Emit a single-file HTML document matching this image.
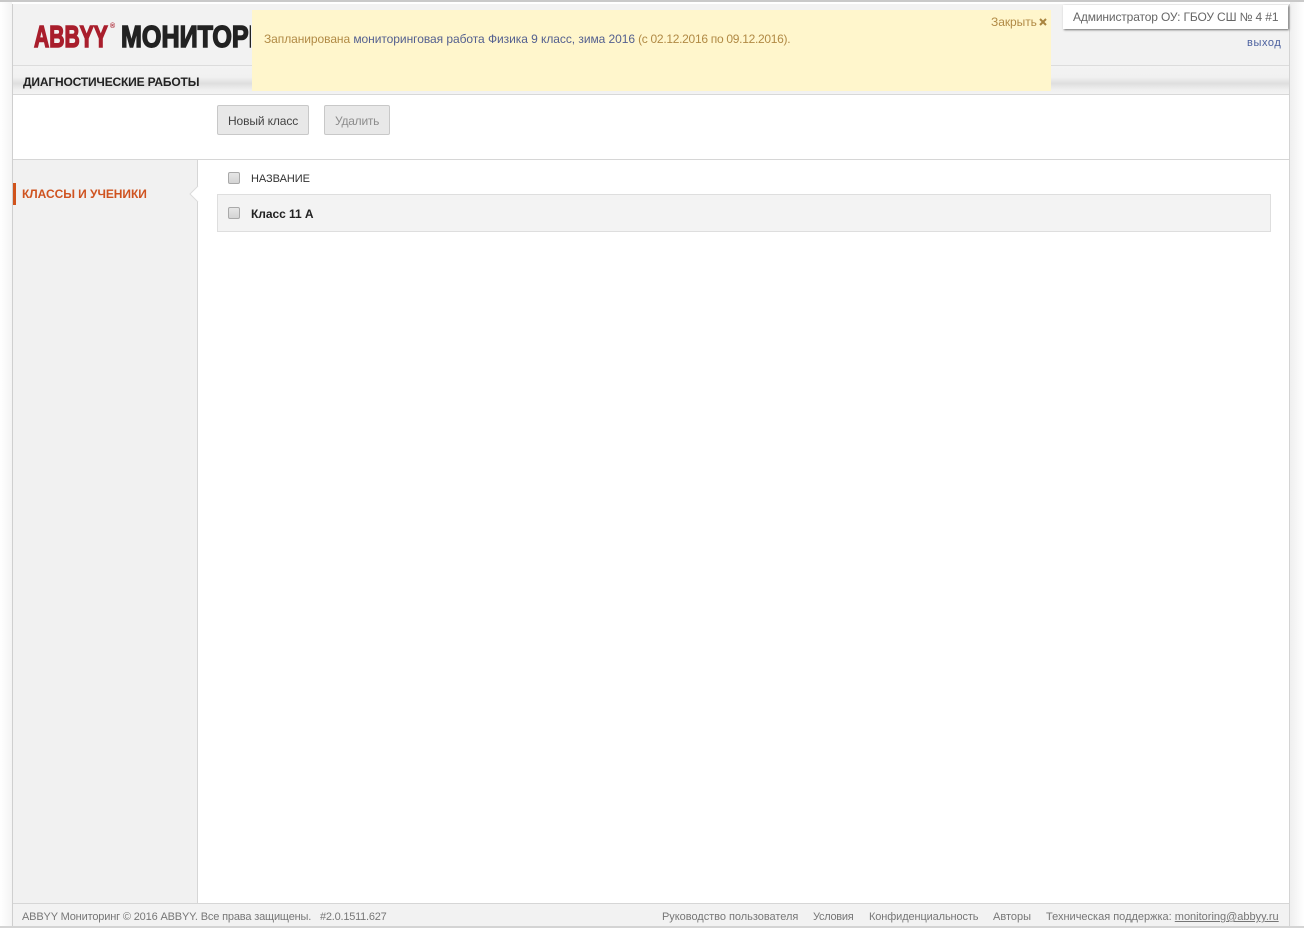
<!DOCTYPE html>
<html lang="ru">
<head>
<meta charset="utf-8">
<title>ABBYY Мониторинг</title>
<style>
html,body{margin:0;padding:0;width:1304px;height:928px;overflow:hidden;background:#fff}
body{position:relative;font-family:"Liberation Sans","DejaVu Sans",sans-serif;font-size:12px;color:#555}
.a{position:absolute}
.t{position:absolute;white-space:nowrap;line-height:16px}
a{color:inherit;text-decoration:none}
.cb{position:absolute;width:10px;height:10px;border:1px solid #a9a9a9;border-radius:2px;background:linear-gradient(#e6e6e6,#d4d4d4)}
.btn{position:absolute;top:105px;height:28px;border:1px solid #c8c8c8;border-radius:2px;background:#e8e8e8;box-sizing:content-box}
</style>
</head>
<body>
<div class="a" style="left:0;top:0;width:1304px;height:2px;background:#c9c9c9"></div>
<div class="a" style="left:0;top:2px;width:12px;height:926px;background:linear-gradient(90deg,#fff,#f4f4f4)"></div>
<div class="a" style="left:1290px;top:2px;width:14px;height:926px;background:linear-gradient(90deg,#efefef,#fff)"></div>

<div class="a" style="left:12px;top:4px;width:1278px;height:924px;background:#fff;border-left:1px solid #cfcfcf;border-right:1px solid #d4d4d4;box-sizing:border-box"></div>

<!-- header -->
<div class="a" style="left:13px;top:4px;width:1276px;height:61px;background:#f2f2f2"></div>
<div class="t" style="left:34px;top:21px;font-size:31px;line-height:32px;font-weight:bold;color:#a91e2c;transform:scaleX(.68);transform-origin:0 0;-webkit-text-stroke:1.5px #a91e2c">ABBYY</div>
<div class="t" style="left:110px;top:23px;font-size:7px;line-height:8px;color:#a91e2c;font-weight:bold">®</div>
<div class="t" style="left:121px;top:21px;width:130px;height:32px;overflow:hidden;font-size:31px;line-height:32px;font-weight:bold;color:#222;-webkit-text-stroke:1.5px #222"><span style="display:inline-block;transform:scaleX(.81);transform-origin:0 0">МОНИТОРИНГ</span></div>

<!-- nav bar -->
<div class="a" style="left:13px;top:65px;width:1276px;height:30px;box-sizing:border-box;border-top:1px solid #dcdcdc;border-bottom:1px solid #d8d8d8;background:linear-gradient(#f3f3f3 0,#f1f1f1 40%,#dedede 62%,#f0f0f0 85%,#f3f3f3 100%)"></div>
<div class="t" style="left:23px;top:74px;font-size:12px;font-weight:bold;color:#222;letter-spacing:-.17px">ДИАГНОСТИЧЕСКИЕ РАБОТЫ</div>

<!-- toolbar -->
<div class="btn" style="left:217px;width:90px"></div>
<div class="t" style="left:228px;top:113px;color:#444;letter-spacing:-.12px">Новый класс</div>
<div class="btn" style="left:324px;width:64px"></div>
<div class="t" style="left:335px;top:113px;color:#8c8c8c;letter-spacing:-.23px">Удалить</div>
<div class="a" style="left:13px;top:159px;width:1276px;height:1px;background:#d6d6d6"></div>

<!-- sidebar -->
<div class="a" style="left:13px;top:160px;width:185px;height:743px;background:#f1f1f1;border-right:1px solid #d6d6d6;box-sizing:border-box"></div>
<div class="a" style="left:13px;top:183px;width:3px;height:22px;background:#d0531c"></div>
<div class="t" style="left:22px;top:186px;font-size:12px;font-weight:bold;color:#cf5320;letter-spacing:-.05px">КЛАССЫ И УЧЕНИКИ</div>
<svg class="a" style="left:189px;top:186px" width="10" height="16" viewBox="0 0 10 16"><path d="M9 0L1 8l8 8z" fill="#fff"/><path d="M9 0L1 8l8 8" fill="none" stroke="#dcdcdc"/></svg>

<!-- table -->
<div class="cb" style="left:228px;top:172px"></div>
<div class="t" style="left:251px;top:171px;font-size:11px;color:#333;letter-spacing:-.05px">НАЗВАНИЕ</div>
<div class="a" style="left:217px;top:194px;width:1054px;height:38px;box-sizing:border-box;background:#f3f3f3;border:1px solid #dedede"></div>
<div class="cb" style="left:228px;top:207px"></div>
<div class="t" style="left:251px;top:206px;font-size:12px;font-weight:bold;color:#222;letter-spacing:-.05px">Класс 11 А</div>

<!-- notification -->
<div class="a" style="left:252px;top:10px;width:799px;height:81px;background:#fff6cc"></div>
<div class="t" style="left:264px;top:31px;color:#b18a45;letter-spacing:-.07px">Запланирована <a href="#" style="color:#54608f;letter-spacing:-.055px">мониторинговая работа Физика 9 класс, зима 2016</a><span style="letter-spacing:-.29px"> (с 02.12.2016 по 09.12.2016).</span></div>
<div class="t" style="left:991px;top:14px;color:#b18a45;letter-spacing:-.05px">Закрыть</div>
<svg class="a" style="left:1039px;top:18px" width="8" height="8" viewBox="0 0 8 8"><path d="M1 1l6 6M7 1L1 7" stroke="#a9843f" stroke-width="2" fill="none"/></svg>

<!-- user box -->
<div class="a" style="left:1063px;top:5px;width:225px;height:24px;background:#fff;box-shadow:1px 1px 2px rgba(0,0,0,.55)"></div>
<div class="t" style="left:1073px;top:9px;color:#666;letter-spacing:-.14px">Администратор ОУ: ГБОУ СШ № 4 #1</div>
<div class="t" style="left:1247px;top:35px;font-size:11px;color:#4a5f9e;letter-spacing:.6px"><a href="#">выход</a></div>

<!-- footer -->
<div class="a" style="left:13px;top:903px;width:1276px;height:23px;box-sizing:border-box;background:#f2f2f2;border-top:1px solid #d6d6d6"></div>
<div class="a" style="left:0;top:926px;width:1304px;height:2px;background:#d4d4d4"></div>
<div class="t" style="left:22px;top:909px;font-size:11px;color:#777;letter-spacing:-.16px">ABBYY Мониторинг © 2016 ABBYY. Все права защищены.</div>
<div class="t" style="left:320px;top:909px;font-size:11px;color:#777;letter-spacing:-.23px">#2.0.1511.627</div>
<div class="t" style="left:662px;top:909px;font-size:11px;color:#777;letter-spacing:-.03px">Руководство пользователя</div>
<div class="t" style="left:813px;top:909px;font-size:11px;color:#777;letter-spacing:-.28px">Условия</div>
<div class="t" style="left:869px;top:909px;font-size:11px;color:#777;letter-spacing:-.12px">Конфиденциальность</div>
<div class="t" style="left:993px;top:909px;font-size:11px;color:#777">Авторы</div>
<div class="t" style="left:1046px;top:909px;font-size:11px;color:#777">Техническая поддержка: <a href="#" style="text-decoration:underline">monitoring@abbyy.ru</a></div>
</body>
</html>
